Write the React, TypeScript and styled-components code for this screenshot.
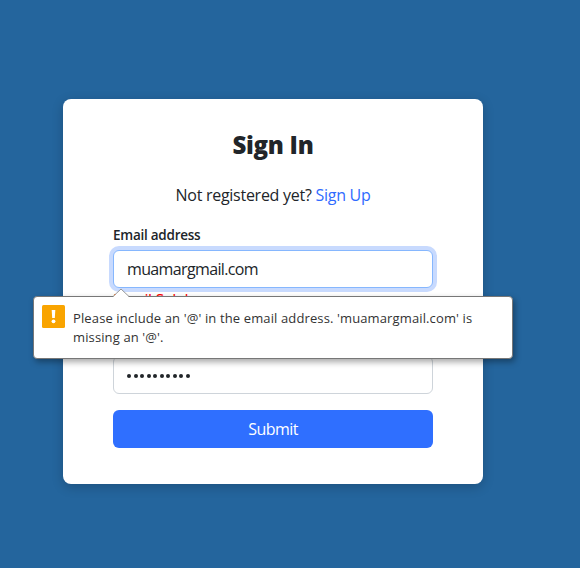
import React from "react";
import styled, { createGlobalStyle } from "styled-components";

const Global = createGlobalStyle`
  * { box-sizing: border-box; }
  body { margin: 0; background: #24659d; color: #212529; font-family: "Open Sans", "Noto Sans", sans-serif; overflow: hidden; }
`;

const Page = styled.main`
  height: 568px;
  padding: 99px 0 0 63px;
  background: #24659d;
`;
const Card = styled.form`
  width: 420px;
  height: 385px;
  padding: 30px 50px 36px;
  border-radius: 8px;
  background: #fff;
  box-shadow: 0 3px 12px rgba(0, 0, 0, 0.2);
`;
const Title = styled.h1`
  margin: 0;
  height: 32px;
  font-size: 24px;
  line-height: 32px;
  font-weight: 800;
  letter-spacing: -0.3px;
  text-align: center;
`;
const Registration = styled.p`
  margin: 22px 0 0;
  font-size: 16px;
  line-height: 24px;
  letter-spacing: -0.27px;
  text-align: center;
`;
const SignUp = styled.a`
  color: #2f6bff;
  text-decoration: none;
`;
const Label = styled.label`
  display: block;
  margin-top: 18px;
  height: 22px;
  font-size: 13.5px;
  line-height: 21px;
  font-weight: 600;
  letter-spacing: -0.25px;
`;
const Field = styled.div`
  position: relative;
  margin-top: 3px;
`;
const Input = styled.input<{ $focused?: boolean }>`
  display: block;
  width: 320px;
  height: 38px;
  padding: 6px 13px;
  border: 1px solid ${({ $focused }) => ($focused ? "#86b7fe" : "#ced4da")};
  border-radius: 6px;
  outline: 0;
  background: #fff;
  color: #212529;
  font: 16px/24px "Open Sans", "Noto Sans", sans-serif;
  letter-spacing: -0.64px;
  box-shadow: ${({ $focused }) => ($focused ? "0 0 0 4px #c8dafe" : "none")};
`;
const ErrorText = styled.div`
  height: 68px;
  color: #ff0000;
  font-size: 16px;
  line-height: 24px;
  letter-spacing: -0.4px;
`;
const PasswordDots = styled.div`
  display: flex;
  align-items: center;
  gap: 2.5px;
  height: 38px;
  padding: 2px 13px 0;
  border: 1px solid #ced4da;
  border-radius: 6px;
`;
const Dot = styled.span`
  width: 4px;
  height: 4px;
  border-radius: 50%;
  background: #212529;
`;
const Submit = styled.button`
  display: block;
  width: 100%;
  height: 38px;
  margin-top: 16px;
  border: 0;
  border-radius: 6px;
  background: #2f6fff;
  color: #fff;
  font: 16px/24px "Open Sans", "Noto Sans", sans-serif;
  letter-spacing: -0.55px;
`;
const Popup = styled.div`
  position: absolute;
  z-index: 1;
  top: 46px;
  left: -80px;
  display: flex;
  gap: 8px;
  width: 480px;
  height: 63px;
  padding: 8px;
  border: 1px solid #777;
  border-radius: 4px;
  background: #fff;
  box-shadow: 2px 3px 6px rgba(0, 0, 0, 0.35);
`;
const Pointer = styled.svg`
  position: absolute;
  left: 79px;
  top: -9px;
`;
const Warning = styled.svg`
  flex: none;
`;
const Message = styled.div`
  padding-top: 4px;
  color: #333;
  font-size: 13px;
  line-height: 19px;
  letter-spacing: 0.125px;
  white-space: nowrap;
`;

export default function App() {
  return (
    <>
      <Global />
      <Page>
        <Card noValidate>
          <Title>Sign In</Title>
          <Registration>Not registered yet? <SignUp href="#">Sign Up</SignUp></Registration>
          <Label htmlFor="email">Email address</Label>
          <Field>
            <Input id="email" defaultValue="muamargmail.com" $focused />
            <Popup role="alert">
              <Pointer width="16" height="10" viewBox="0 0 16 10">
                <path d="M0 9L8 1L16 9V10H0Z" fill="#fff" />
                <path d="M0 8.5L8 1L16 8.5" fill="none" stroke="#999" />
              </Pointer>
              <Warning width="23" height="23" viewBox="0 0 23 23">
                <rect width="23" height="23" rx="1.5" fill="#f9a400" />
                <path d="M9.7 5H13.3L12.8 13H10.2Z" fill="#fff" />
                <circle cx="11.5" cy="16.3" r="1.9" fill="#fff" />
              </Warning>
              <Message>Please include an '@' in the email address. 'muamargmail.com' is<br />missing an '@'.</Message>
            </Popup>
          </Field>
          <ErrorText>Email Salah</ErrorText>
          <PasswordDots role="textbox" aria-label="Password">
            {Array.from({ length: 10 }, (_, i) => <Dot key={i} />)}
          </PasswordDots>
          <Submit type="button">Submit</Submit>
        </Card>
      </Page>
    </>
  );
}
